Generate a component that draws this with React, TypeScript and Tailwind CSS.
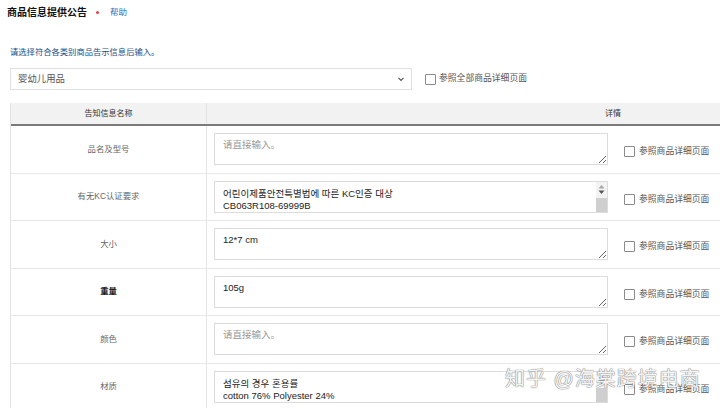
import React from 'react'

const rows = [
  { label: '品名及型号', value: '', bold: false, scroll: false },
  { label: '有无KC认证要求', value: '어린이제품안전특별법에 따른 KC인증 대상\nCB063R108-69999B', bold: false, scroll: true },
  { label: '大小', value: '12*7 cm', bold: false, scroll: false },
  { label: '重量', value: '105g', bold: true, scroll: false },
  { label: '颜色', value: '', bold: false, scroll: false },
  { label: '材质', value: '섬유의 경우 혼용률\ncotton 76% Polyester 24%', bold: false, scroll: true },
]

function Box() {
  return <span className="inline-block w-[11px] h-[11px] border border-[#8a8a8a] rounded-[1px] bg-white shrink-0" />
}

// fake scrollbar, the headless shot hides real ones
function ScrollBar() {
  return (
    <div className="absolute right-[1px] top-[1px] bottom-[1px] w-[11px] bg-[#f3f3f3] flex flex-col items-center">
      <svg width="7" height="5" viewBox="0 0 7 5" className="mt-[2px]">
        <path d="M0.5 4.5 L3.5 1 L6.5 4.5 Z" fill="#a8a8a8" />
      </svg>
      <svg width="7" height="5" viewBox="0 0 7 5" className="mt-[1px]">
        <path d="M0.5 0.5 L3.5 4 L6.5 0.5 Z" fill="#555" />
      </svg>
      <div className="mt-[3px] w-[11px] flex-1 bg-[#cfcfcf]" />
    </div>
  )
}

export default function App() {
  return (
    <div
      className="relative w-[720px] h-[408px] overflow-hidden bg-white text-[#333]"
      style={{ fontFamily: '"Liberation Sans", "Noto Sans CJK SC", "Noto Sans CJK KR", sans-serif' }}
    >
      <div className="flex items-center h-4 mt-1 ml-[7px]">
        <span className="text-[10px] font-bold text-[#111]">商品信息提供公告</span>
        <span className="ml-[9px] w-[3px] h-[3px] rounded-full bg-[#d44]" />
        <span className="ml-[11px] text-[8.5px] text-[#2f6db0]">帮助</span>
      </div>

      <div className="mt-[26px] ml-[10px] text-[8.3px] leading-[12px] text-[#1d4c84]">请选择符合各类别商品告示信息后输入。</div>

      <div className="flex items-center mt-[10px] ml-[10px] h-[22px]">
        <div className="flex items-center justify-between w-[402px] h-[22px] border border-[#e0e0e0] bg-white pl-[7px] pr-[5px]">
          <span className="text-[9.4px] text-[#555]">婴幼儿用品</span>
          <svg width="10" height="10" viewBox="0 0 10 10" className="text-[#555]">
            <path d="M2.5 3.8 L5 6.3 L7.5 3.8" fill="none" stroke="currentColor" strokeWidth="1.2" />
          </svg>
        </div>
        <div className="flex items-center ml-[13px] gap-[3px]">
          <Box />
          <span className="text-[8.8px] text-[#555]">参照全部商品详细页面</span>
        </div>
      </div>

      <div className="mt-[13px] ml-[10px] w-[1010px] border-l border-[#e3e3e3]">
        <div className="flex h-[23px] bg-[#f2f2f2] border-b-2 border-[#7a7a7a] text-[8px] text-[#333]">
          <div className="w-[196px] flex items-center justify-center border-r border-[#e3e3e3]">告知信息名称</div>
          <div className="flex-1 flex items-center pl-[398px]">详情</div>
        </div>
        {rows.map((r) => (
          <div key={r.label} className="flex h-[47.5px] border-b border-[#e8e8e8]">
            <div
              className={`w-[196px] flex items-center justify-center border-r border-[#e3e3e3] text-[8.4px] ${
                r.bold ? 'text-[#222] font-bold' : 'text-[#666]'
              }`}
            >
              {r.label}
            </div>
            <div className="flex-1 flex items-start pt-[7px] pl-[7px]">
              <div className="relative w-[394px] h-[32px]">
                <textarea
                  readOnly
                  defaultValue={r.value}
                  placeholder="请直接输入。"
                  className={`block w-full h-full border border-[#dcdcdc] bg-white pl-[8px] pr-[14px] ${
                    r.scroll ? 'pt-[6px]' : 'pt-[5px]'
                  } overflow-hidden text-[9.5px] leading-[12px] text-[#222] placeholder:text-[#999] outline-none`}
                />
                {r.scroll && <ScrollBar />}
              </div>
              <div className="flex items-center ml-[16px] mt-[12px] gap-[4px]">
                <Box />
                <span className="text-[8.8px] text-[#555] whitespace-nowrap">参照商品详细页面</span>
              </div>
            </div>
          </div>
        ))}
      </div>

      <div className="absolute left-[505px] top-[364px] text-[20px] tracking-[1px] text-[#f4f4f4] [text-shadow:0_0_1px_#777,0_0_1px_#777] whitespace-nowrap">
        知乎 @海棠跨境电商
      </div>
    </div>
  )
}
